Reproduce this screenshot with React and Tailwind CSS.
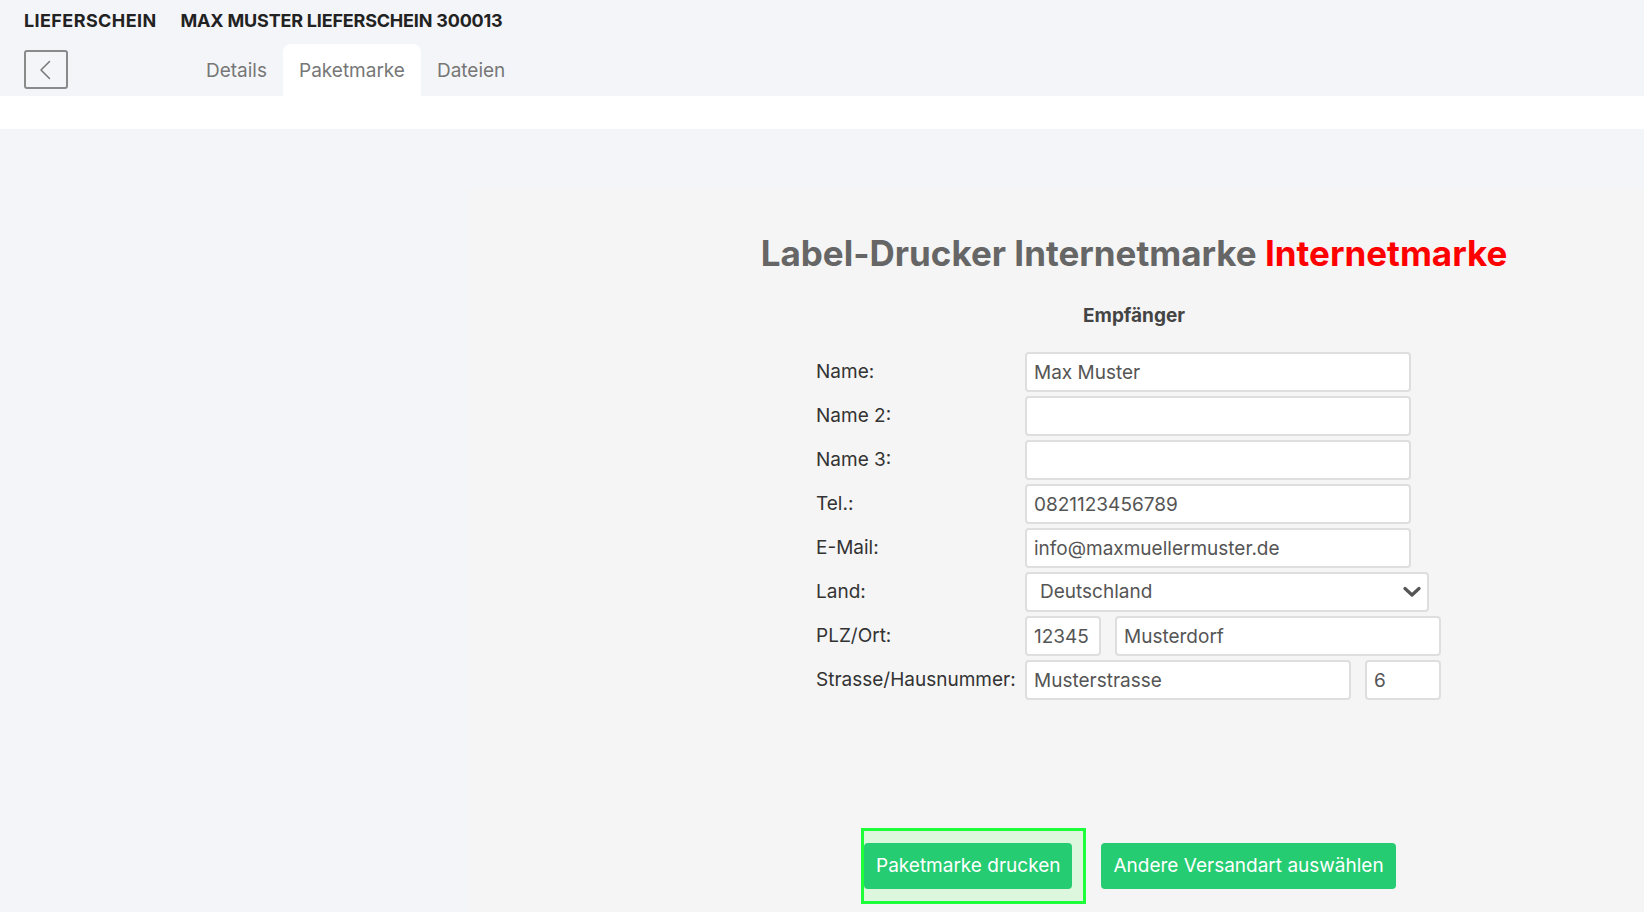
import { useState } from 'react';

const tabs = ['Details', 'Paketmarke', 'Dateien'];

const fieldClass =
    'h-10 rounded-[4px] border-2 border-[#dedede] bg-white px-[7px] text-[19px] text-[#555] outline-none';

const Field = ({ value = '', className = '' }) => (
    <input className={`${fieldClass} ${className}`} defaultValue={value} />
);

const Row = ({ label, children }) => (
    <>
        <div className="text-[19px] text-[#333]">{label}</div>
        <div className="flex gap-[14px]">{children}</div>
    </>
);

export default function App() {
    const [active, setActive] = useState('Paketmarke');

    return (
        <div className="min-h-screen bg-[#f4f5f9] font-['Inter',sans-serif] flex flex-col">
            {/* Header */}
            <div className="px-6 pt-[8px]">
                <div className="flex items-center gap-6 text-[18px] font-bold text-[#222] leading-[26px]">
                    <span className="tracking-[0.4px]">LIEFERSCHEIN</span>
                    <span className="tracking-[-0.2px]">MAX MUSTER LIEFERSCHEIN 300013</span>
                </div>
                <div className="mt-[10px] flex items-end">
                    <button className="mb-[7px] flex h-[39px] w-[44px] items-center justify-center rounded-[3px] border-2 border-[#8a8a8a] text-[#777]">
                        <svg width="24" height="24" viewBox="0 0 24 24" fill="none" stroke="currentColor" strokeWidth="1.5" strokeLinecap="round" strokeLinejoin="round">
                            <path d="M15.5 3.5L7 12l8.5 8.5" />
                        </svg>
                    </button>
                    <div className="ml-[122px] flex">
                        {tabs.map((t) => (
                            <button
                                key={t}
                                onClick={() => setActive(t)}
                                className={`h-[52px] px-4 pt-[2px] text-[19px] text-[#777] rounded-t-lg ${active === t ? 'bg-white' : ''}`}
                            >
                                {t}
                            </button>
                        ))}
                    </div>
                </div>
            </div>
            <div className="h-[33px] bg-white" />

            {/* Content */}
            <div className="flex flex-1 pt-[60px] pl-[468px]">
                <div className="flex-1 bg-[#f5f5f5] pt-[43px] pb-6">
                    <div className="ml-[156px] text-center">
                        <h1 className="text-[35px] font-bold leading-[42px] text-[#666]">
                            Label-Drucker Internetmarke <span className="text-[#ff0000]">Internetmarke</span>
                        </h1>
                        <h2 className="mt-[28px] text-[19px] font-bold leading-[27px] text-[#444]">Empfänger</h2>
                    </div>

                    <div className="ml-[348px] mt-[23px] grid grid-cols-[209px_auto] items-center gap-y-1">
                        <Row label="Name:">
                            <Field value="Max Muster" className="w-[386px]" />
                        </Row>
                        <Row label="Name 2:">
                            <Field className="w-[386px]" />
                        </Row>
                        <Row label="Name 3:">
                            <Field className="w-[386px]" />
                        </Row>
                        <Row label="Tel.:">
                            <Field value="0821123456789" className="w-[386px]" />
                        </Row>
                        <Row label="E-Mail:">
                            <Field value="info@maxmuellermuster.de" className="w-[386px]" />
                        </Row>
                        <Row label="Land:">
                            <div className="relative w-[404px]">
                                <select className={`${fieldClass} w-full appearance-none pl-[13px]`} defaultValue="DE">
                                    <option value="DE">Deutschland</option>
                                    <option value="AT">Österreich</option>
                                    <option value="CH">Schweiz</option>
                                </select>
                                <svg className="pointer-events-none absolute right-[8px] top-[14px]" width="18" height="12" viewBox="0 0 18 12" fill="none" stroke="#555" strokeWidth="3.2" strokeLinecap="round" strokeLinejoin="round">
                                    <path d="M2 2.5l7 6.5 7-6.5" />
                                </svg>
                            </div>
                        </Row>
                        <Row label="PLZ/Ort:">
                            <Field value="12345" className="w-[76px]" />
                            <Field value="Musterdorf" className="w-[326px]" />
                        </Row>
                        <Row label="Strasse/Hausnummer:">
                            <Field value="Musterstrasse" className="w-[326px]" />
                            <Field value="6" className="w-[76px]" />
                        </Row>
                    </div>

                    <div className="ml-[393px] mt-[128px] flex items-start gap-[15px]">
                        <div className="border-[3px] border-[#1cff3a] bg-[#dcf7dd] py-3 pr-[11px]">
                            <button className="h-[46px] rounded-[4px] bg-[#25cc72] px-3 text-[19px] text-white">
                                Paketmarke drucken
                            </button>
                        </div>
                        <button className="mt-[15px] h-[46px] rounded-[4px] bg-[#25cc72] px-3 text-[19px] text-white">
                            Andere Versandart auswählen
                        </button>
                    </div>
                </div>
            </div>
        </div>
    );
}
